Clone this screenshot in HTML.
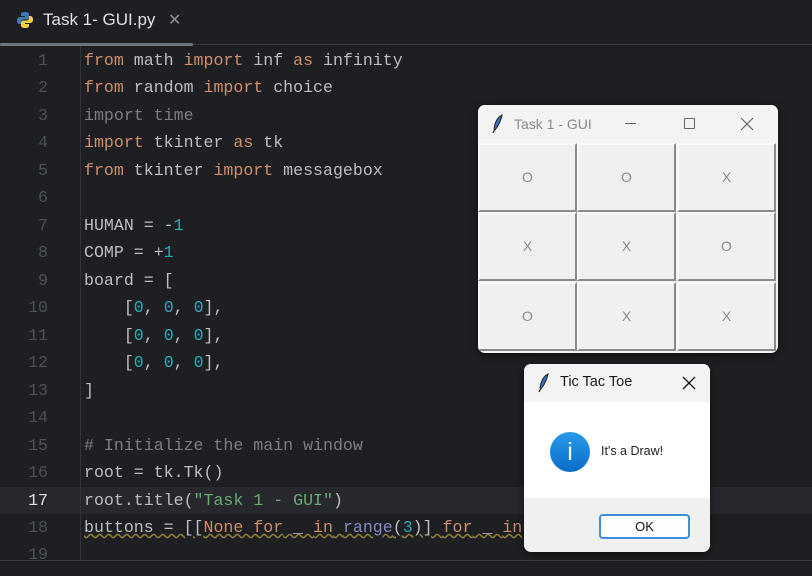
<!DOCTYPE html>
<html><head><meta charset="utf-8"><style>
*{margin:0;padding:0;box-sizing:border-box}
body{width:812px;height:576px;background:#1e1f22;position:relative;overflow:hidden;font-family:"Liberation Sans",sans-serif}
.tabbar{position:absolute;left:0;top:0;width:812px;height:45px;background:#1e1f22;border-bottom:1px solid #393b40}
.tabline{position:absolute;left:0;top:43px;width:193px;height:3px;background:#6f737a;border-radius:1px}
.tabtxt{position:absolute;left:43px;top:10px;color:#dfe1e5;font-size:17px}
.tabx{position:absolute;left:168px;top:10px;color:#8c8f94;font-size:16px}
.gut{position:absolute;left:80px;top:46px;width:1px;height:514px;background:#313338}
.hl{position:absolute;left:0;top:487px;width:812px;height:27px;background:#26282e}
.code{position:absolute;left:0;top:47px;width:812px;height:513px;overflow:hidden;font-family:"Liberation Mono",monospace;font-size:16.6px;line-height:27.47px;color:#bcbec4}
.ln{position:absolute;left:0;width:48px;text-align:right;color:#4b5059}
.c{position:absolute;left:84px;top:0;white-space:pre}
.k{color:#cf8e6d}.n{color:#2aacb8}.g{color:#7a7e85}.s{color:#6aab73}.b{color:#8888c6}
.bot{position:absolute;left:0;top:560px;width:812px;height:16px;background:#1e1f22;border-top:1px solid #393b40}
.win{position:absolute;left:478px;top:105px;width:300px;height:248px;background:#f0f0f0;border-radius:7px;overflow:hidden;box-shadow:0 2px 8px rgba(0,0,0,.5)}
.tb{height:38px;background:#f3f3f3;position:relative;font-size:14px;color:#8a8a8a}
.cell{position:absolute;width:99px;height:69px;background:#f0f0f0;border-top:2px solid #fafafa;border-left:2px solid #fafafa;border-right:2px solid #8a8a8a;border-bottom:2px solid #8a8a8a;color:#8a8a8a;font-size:14px;text-align:center;line-height:65px}
.dlg{position:absolute;left:524px;top:364px;width:186px;height:188px;background:#f0f0f0;border-radius:7px;overflow:hidden;box-shadow:0 2px 10px rgba(0,0,0,.5)}
</style></head><body>
<div class="tabbar"></div>
<svg style="position:absolute;left:16px;top:11px" width="18" height="18" viewBox="0 0 18 18"><path d="M9 1C5 1 5 2.5 5 3.5V5h4v1H3.5C2 6 1 7.5 1 9.5S2 13 3.5 13H5v-2.2C5 9.5 6 8.5 7.5 8.5h3.5c1 0 2-.8 2-2V3.5C13 2 11.5 1 9 1z" fill="#3d7ab8"/><path d="M9 17c4 0 4-1.5 4-2.5V13H9v-1h5.5c1.5 0 2.5-1.5 2.5-3.5S16 5 14.5 5H13v2.2c0 1.3-1 2.3-2.5 2.3H7c-1 0-2 .8-2 2v3C5 16 6.5 17 9 17z" fill="#f7d04a"/></svg>
<div class="tabtxt">Task 1- GUI.py</div>
<div class="tabx">✕</div>
<div class="tabline"></div>
<div class="hl"></div>
<div class="gut"></div>
<div class="code"><div class="ln" style="top:0">1</div><div class="ln" style="top:27.47px">2</div><div class="ln" style="top:54.94px">3</div><div class="ln" style="top:82.41px">4</div><div class="ln" style="top:109.88px">5</div><div class="ln" style="top:137.35px">6</div><div class="ln" style="top:164.82px">7</div><div class="ln" style="top:192.29px">8</div><div class="ln" style="top:219.76px">9</div><div class="ln" style="top:247.23px">10</div><div class="ln" style="top:274.7px">11</div><div class="ln" style="top:302.17px">12</div><div class="ln" style="top:329.64px">13</div><div class="ln" style="top:357.11px">14</div><div class="ln" style="top:384.58px">15</div><div class="ln" style="top:412.05px">16</div><div class="ln" style="top:439.52px;color:#dfe1e5">17</div><div class="ln" style="top:466.99px">18</div><div class="ln" style="top:494.46px">19</div><div class="c"><span class="k">from</span> math <span class="k">import</span> inf <span class="k">as</span> infinity
<span class="k">from</span> random <span class="k">import</span> choice
<span class="g">import time</span>
<span class="k">import</span> tkinter <span class="k">as</span> tk
<span class="k">from</span> tkinter <span class="k">import</span> messagebox

HUMAN = -<span class="n">1</span>
COMP = +<span class="n">1</span>
board = [
    [<span class="n">0</span>, <span class="n">0</span>, <span class="n">0</span>],
    [<span class="n">0</span>, <span class="n">0</span>, <span class="n">0</span>],
    [<span class="n">0</span>, <span class="n">0</span>, <span class="n">0</span>],
]

<span class="g"># Initialize the main window</span>
root = tk.Tk()
root.title(<span class="s">"Task 1 - GUI"</span>)
<span style="text-decoration:underline wavy #8a7a3a">buttons = [[<span class="k">None for</span> _ <span class="k">in</span> <span class="b">range</span>(<span class="n">3</span>)] <span class="k">for</span> _ <span class="k">in</span></span></div></div>
<div class="bot"></div>

<div class="win">
<div class="tb">
<svg style="position:absolute;left:14px;top:9px" width="12" height="20" viewBox="0 0 12 20"><path d="M10 1C6 3 3 8 2 15l1 1C6 12 9 7 10 1z" fill="#3a6fc4" stroke="#222" stroke-width="1"/><path d="M3 15L1 19" stroke="#222" stroke-width="1.2"/></svg>
<span style="position:absolute;left:36px;top:11px">Task 1 - GUI</span>
<div style="position:absolute;left:147px;top:18px;width:11px;height:1px;background:#666"></div>
<div style="position:absolute;left:206px;top:13px;width:11px;height:11px;border:1px solid #666;border-radius:1px"></div>
<svg style="position:absolute;left:262px;top:12px" width="14" height="14"><path d="M1 1L13 13M13 1L1 13" stroke="#666" stroke-width="1.2"/></svg>
</div>
<div class="cell" style="left:0;top:38px">O</div><div class="cell" style="left:99px;top:38px">O</div><div class="cell" style="left:199px;top:38px">X</div>
<div class="cell" style="left:0;top:107px">X</div><div class="cell" style="left:99px;top:107px">X</div><div class="cell" style="left:199px;top:107px">O</div>
<div class="cell" style="left:0;top:177px">O</div><div class="cell" style="left:99px;top:177px">X</div><div class="cell" style="left:199px;top:177px">X</div>
</div>

<div class="dlg">
<div style="height:38px;background:#f3f3f3;position:relative">
<svg style="position:absolute;left:14px;top:9px" width="12" height="20" viewBox="0 0 12 20"><path d="M10 1C6 3 3 8 2 15l1 1C6 12 9 7 10 1z" fill="#3a6fc4" stroke="#222" stroke-width="1"/><path d="M3 15L1 19" stroke="#222" stroke-width="1.2"/></svg>
<span style="position:absolute;left:36px;top:10px;font-size:14.5px;color:#1a1a1a">Tic Tac Toe</span>
<svg style="position:absolute;left:158px;top:12px" width="14" height="14"><path d="M1 1L13 13M13 1L1 13" stroke="#111" stroke-width="1.3"/></svg>
</div>
<div style="height:96px;background:#fff;position:relative">
<div style="position:absolute;left:26px;top:30px;width:40px;height:40px;border-radius:50%;background:linear-gradient(#2a9be8,#0a6cc8);color:#fff;text-align:center;font-size:25px;line-height:40px">i</div>
<span style="position:absolute;left:77px;top:42px;font-size:12.5px;color:#222">It's a Draw!</span>
</div>
<div style="position:absolute;left:75px;top:150px;width:91px;height:25px;background:#fdfdfd;border:2px solid #3c8fd8;border-radius:4px;text-align:center;font-size:13px;line-height:21px;color:#111">OK</div>
</div>
</body></html>
